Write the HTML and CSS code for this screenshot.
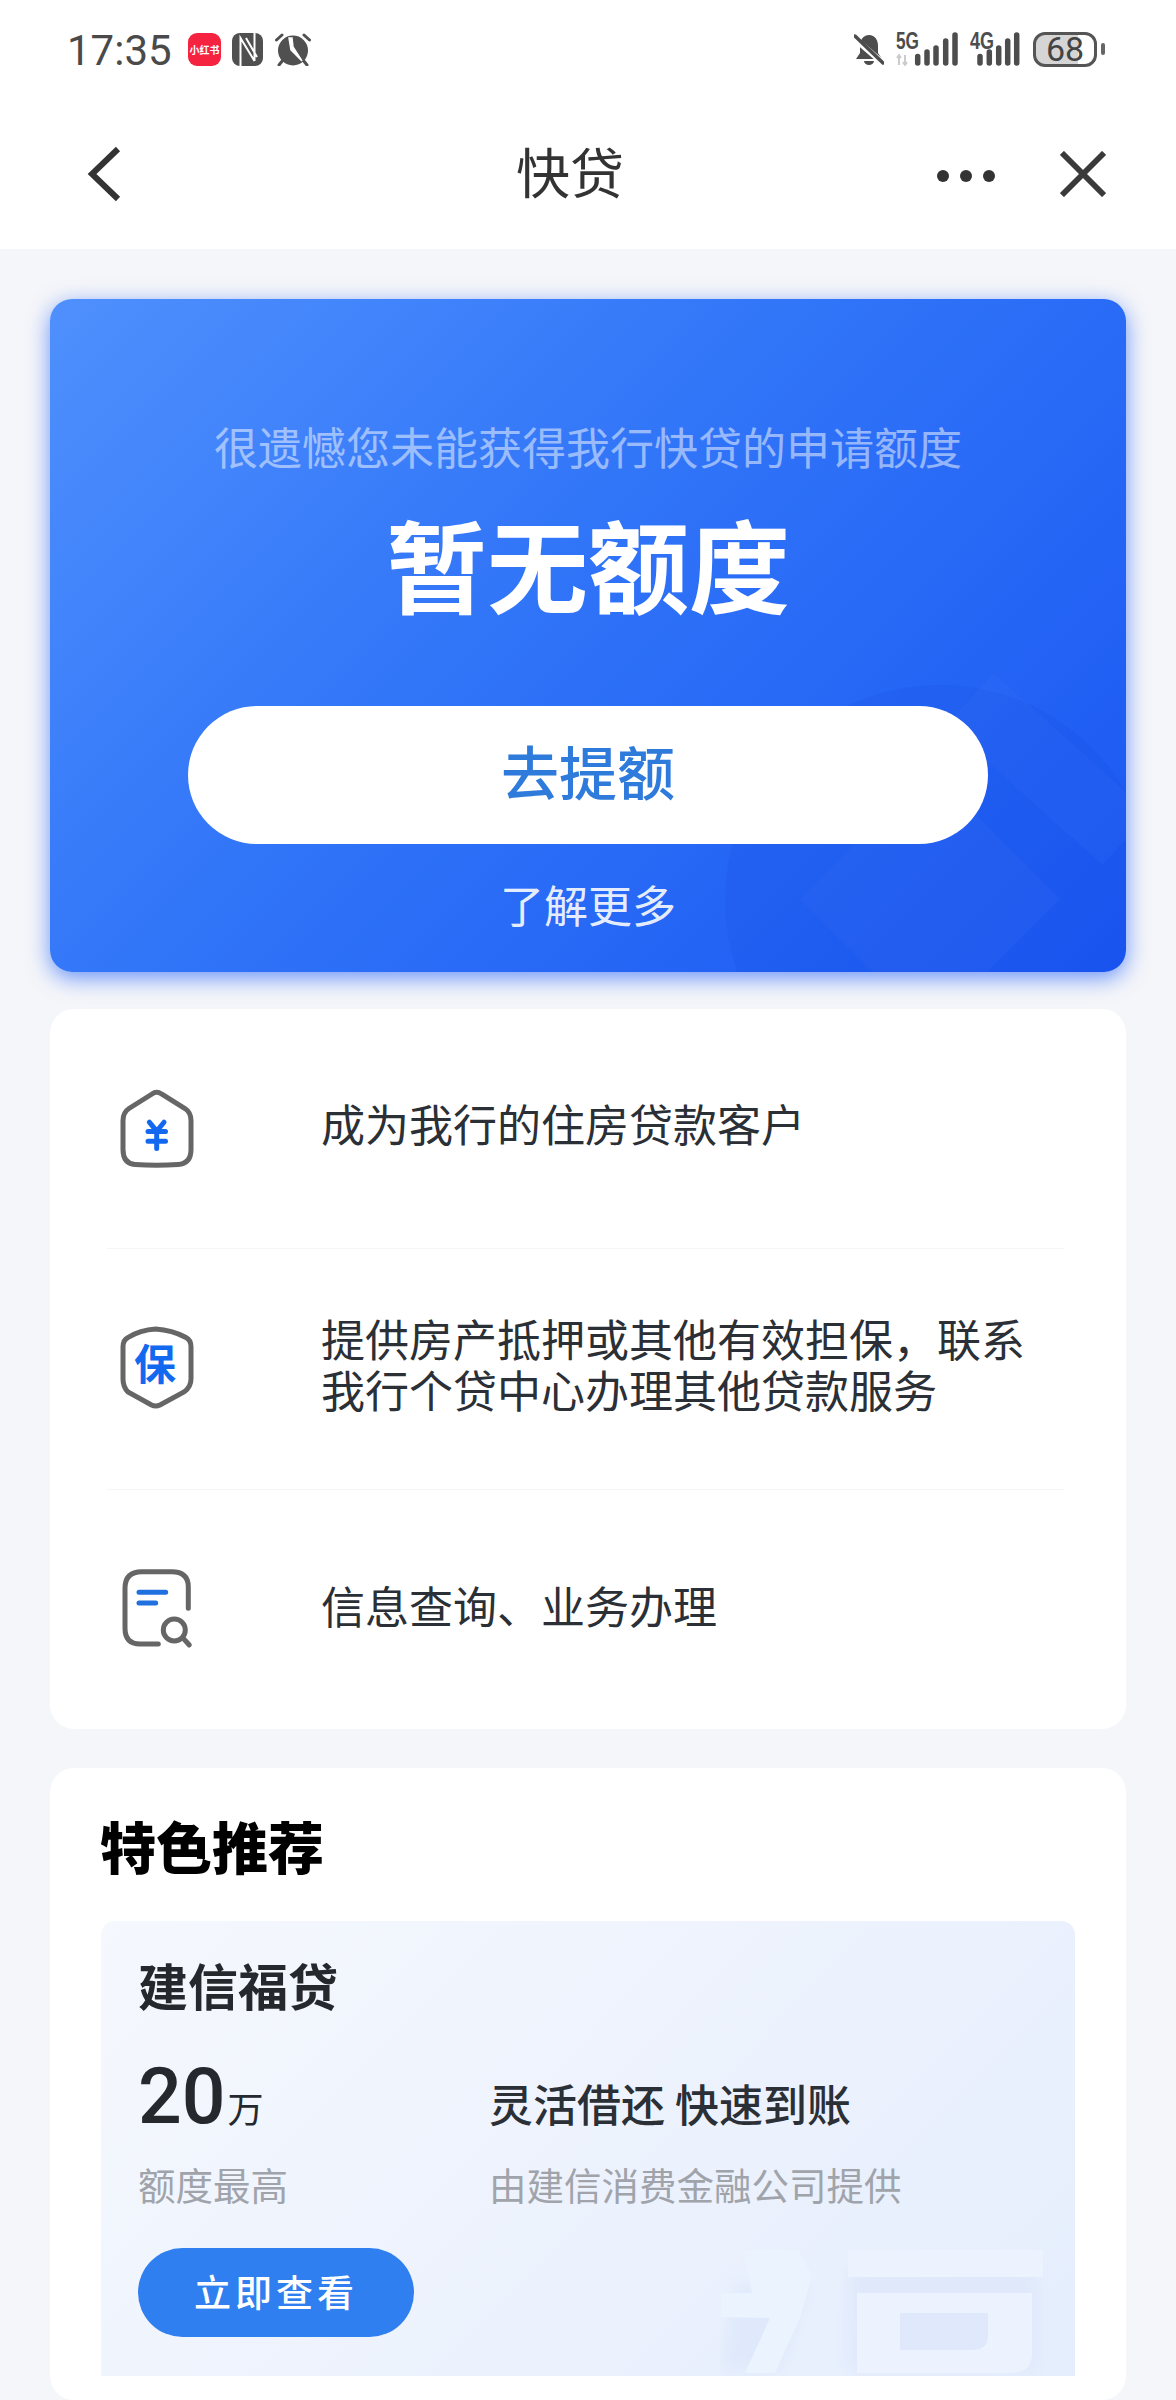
FILE: index.html
```html
<!DOCTYPE html>
<html lang="zh-CN">
<head>
<meta charset="utf-8">
<title>快贷</title>
<link rel="stylesheet" href="styles.css">
</head>
<body>
<div class="page">
  <header class="header">
    <div class="status">
      <span class="time">17:35</span>
      <span class="app-badge">小红书</span>
      <svg class="ic-nfc" viewBox="0 0 31 33"><rect width="31" height="33" rx="8" fill="#505050"/><path d="M8.500 33V5l14 23M22.500 0v28M14 5l11 19" fill="none" stroke="#fff" stroke-width="2"/></svg>
      <svg class="ic-alarm" viewBox="0 0 36 33"><circle cx="18" cy="17.500" r="15" fill="#505050"/><path d="M1.500 7 7 2M34.500 7 29 2M8 27l-4 5M28 27l4 5" stroke="#505050" stroke-width="3" stroke-linecap="round"/><path d="M14 5 16 17 27 28 18 14 17 5z" fill="#fff" stroke="#fff" stroke-width="1.500"/></svg>
      <div class="status-right">
        <svg class="ic-bell" viewBox="0 0 30 33"><path d="M15 2c6 0 9 5 9 11v7l4 6H2l4-6v-7C6 7 9 2 15 2z" fill="#4d4d4d"/><path d="M10 28h10a5 4 0 0 1-10 0z" fill="#4d4d4d"/><path d="M0 5 30 31" stroke="#fff" stroke-width="6"/><path d="M1 3 29 30" stroke="#4d4d4d" stroke-width="3.500" stroke-linecap="round"/></svg>
        <svg class="ic-sig ic-sig5" viewBox="0 -6 62 40"><text x="0" y="17" class="sig-text" textLength="23" lengthAdjust="spacingAndGlyphs">5G</text><path d="M3 33v-9M1 26l2-3 2 3M9 23v9M7 30l2 3 2-3" stroke="#ccc" stroke-width="2" fill="none"/><path d="M21.700 24.500V31M31 20v11M40 16v15M49.700 9v22M59 3v28" stroke="#4d4d4d" stroke-width="5.500" stroke-linecap="round"/></svg>
        <svg class="ic-sig ic-sig4" viewBox="0 -6 50 40"><text x="0" y="17" class="sig-text" textLength="24" lengthAdjust="spacingAndGlyphs">4G</text><path d="M10 24.500V31M19.300 20v11M28.700 16v15M37.700 9v22M46.700 3v28" stroke="#4d4d4d" stroke-width="5.500" stroke-linecap="round"/></svg>
        <div class="battery"><span class="battery-num">68</span></div>
        <span class="battery-tip"></span>
      </div>
    </div>
    <nav class="nav">
      <svg class="ic-back" viewBox="0 0 34 56"><path d="M31 3 5 28l26 25" fill="none" stroke="#333" stroke-width="6"/></svg>
      <div class="nav-title">快贷</div>
      <div class="nav-dots"><i></i><i></i><i></i></div>
      <svg class="ic-close" viewBox="0 0 48 48"><path d="M2 2l44 44M46 2 2 46" fill="none" stroke="#3a3a3a" stroke-width="6"/></svg>
    </nav>
  </header>

  <main class="main">
    <section class="hero">
      <svg class="hero-mark" viewBox="0 0 1076 673">
        <circle cx="890" cy="601" r="215" fill="#0f48dc" fill-opacity=".13"/>
        <path d="M880 470 1010 600 880 730 750 600z" fill="#fff" fill-opacity=".025"/>
        <path d="M920 400 1076 540" stroke="#5c8dff" stroke-opacity=".08" stroke-width="70"/>
      </svg>
      <p class="hero-sub">很遗憾您未能获得我行快贷的申请额度</p>
      <h1 class="hero-title">暂无额度</h1>
      <a class="hero-btn">去提额</a>
      <a class="hero-link">了解更多</a>
    </section>

    <section class="card list">
      <div class="row row-a">
        <svg class="row-ic" viewBox="0 0 76 82">
          <path d="M32 6.500Q36.700 3 41.500 6.500L65 21Q71 25 71 33V62Q71 76 58 77Q36.700 78.500 15 77Q3 76 3 62V33Q3 25 9 21Z" fill="none" stroke="#666" stroke-width="5"/>
          <path d="M29.300 34.700 36.700 43.700 44 34.700M28 44H45.500M28 53.700H45.500M36.700 44V61" fill="none" stroke="#1269f0" stroke-width="5" stroke-linecap="round" stroke-linejoin="round"/>
        </svg>
        <p class="row-text">成为我行的住房贷款客户</p>
      </div>
      <div class="row row-b">
        <svg class="row-ic row-ic-up" viewBox="0 0 76 85">
          <path d="M35.700 4Q52 5 66 12.500Q71 15 71 22V54Q71 62 64 67L40 80Q35.700 82 31.500 80L8 67Q3 62 3 54V22Q3 15 8 12.500Q20 5 35.700 4Z" fill="none" stroke="#666" stroke-width="5"/>
          <text x="35" y="55" class="bao">保</text>
        </svg>
        <p class="row-text">提供房产抵押或其他有效担保，联系<br>我行个贷中心办理其他贷款服务</p>
      </div>
      <div class="row">
        <svg class="row-ic row-ic-up" viewBox="0 0 76 85">
          <path d="M68.300 42.300V20.700Q68.300 5.700 51.700 5.700H21.700Q5 5.700 5 22.300V62.300Q5 78 20 78H38.300" fill="none" stroke="#666" stroke-width="5" stroke-linecap="round"/>
          <path d="M19 26.300H45.700M19 37H35.700" stroke="#2070e0" stroke-width="5" stroke-linecap="round"/>
          <circle cx="54.300" cy="64" r="11" fill="none" stroke="#666" stroke-width="5"/>
          <path d="M63.300 72.300 69.300 79" stroke="#666" stroke-width="5" stroke-linecap="round"/>
        </svg>
        <p class="row-text">信息查询、业务办理</p>
      </div>
    </section>

    <section class="card feature">
      <h2 class="feature-title">特色推荐</h2>
      <div class="promo">
        <svg class="promo-mark" viewBox="0 0 355 130">
          <defs><filter id="soft" x="-20%" y="-30%" width="140%" height="160%"><feGaussianBlur stdDeviation="8"/></filter></defs>
          <g filter="url(#soft)" fill="#dfe9fb">
            <rect x="128" y="20" width="190" height="105"/>
            <path d="M15 40 90 40 60 125 0 125z"/>
          </g>
          <path d="M24 4H78L92 30 80 72 55 127H25L50 72 1 71V47H32Z" fill="#eaf3fe"/>
          <path d="M128 4H323V31H128ZM137 47H312V108Q312 127 290 127H137ZM180 67V104H252Q268 104 268 90V67Z" fill="#ecf3fe" fill-rule="evenodd"/>
        </svg>
        <h3 class="promo-name">建信福贷</h3>
        <div class="promo-grid">
          <div class="amount"><b>20</b><span>万</span></div>
          <div class="promo-desc">灵活借还 快速到账</div>
          <div class="promo-note">额度最高</div>
          <div class="promo-note">由建信消费金融公司提供</div>
        </div>
        <a class="promo-btn">立即查看</a>
      </div>
    </section>
  </main>
</div>
</body>
</html>
```

FILE: styles.css
```css
* { box-sizing: border-box; }
html, body { margin: 0; padding: 0; }
body {
  background: #f5f6f9;
  font-family: "Noto Sans CJK SC", "Noto Sans", sans-serif;
  color: #2b2f36;
}
.page { width: 1176px; height: 2400px; overflow: hidden; }
p, h1, h2, h3 { margin: 0; }

.header { background: #fff; height: 249px; }
.status { height: 98px; display: flex; align-items: center; padding-left: 67px; }
.time { width: 121px; padding-top: 4px; font: 42px/1 Roboto, sans-serif; color: #4a4a4a; }
.app-badge {
  width: 33px; height: 33px; border-radius: 9px; background: #f5233f; color: #fff;
  font-size: 10px; font-weight: 700; line-height: 33px; text-align: center; white-space: nowrap;
}
.ic-nfc { width: 31px; height: 33px; margin-left: 11px; }
.ic-alarm { width: 36px; height: 33px; margin-left: 12px; }
.status-right { margin-left: auto; padding-right: 71px; display: flex; align-items: center; }
.ic-bell { width: 30px; height: 33px; }
.ic-sig { height: 40px; margin-top: -6px; margin-left: 12px; }
.ic-sig5 { width: 62px; }
.ic-sig4 { width: 50px; }
.sig-text { font: 700 24px "Liberation Sans", sans-serif; fill: #4d4d4d; }
.battery {
  width: 64px; height: 35px; margin-left: 13px; border: 3px solid #555; border-radius: 12px;
  background: linear-gradient(90deg, #d5d5d5 0 42px, #fff 42px);
  text-align: center;
}
.battery-num { display: block; font: 34px/29px Roboto, sans-serif; color: #444; }
.battery-tip { width: 4px; height: 12px; margin-left: 4px; border-radius: 2px; background: #666; }

.nav { height: 151px; display: flex; align-items: center; padding-left: 87px; }
.ic-back { width: 34px; height: 56px; }
.nav-title { width: 700px; margin-left: 99px; margin-top: -6px; text-align: center; font-size: 54px; line-height: 70px; color: #333; }
.nav-dots { display: flex; gap: 11px; width: 58px; margin-left: 17px; margin-top: 5px; }
.nav-dots i { width: 12px; height: 12px; border-radius: 50%; background: #333; }
.ic-close { width: 46px; height: 46px; margin-left: 65px; }

.main { padding: 50px 50px 0; }
.hero {
  position: relative; overflow: hidden; height: 673px; border-radius: 22px;
  background: linear-gradient(135deg, #4f90fd 0%, #3074f8 45%, #1a56f2 100%);
  box-shadow: 0 6px 22px rgba(45, 105, 250, .7);
  padding-top: 117px; display: flex; flex-direction: column; align-items: center;
}
.hero-mark { position: absolute; left: 0; top: 0; width: 1076px; height: 673px; }
.hero-sub, .hero-title, .hero-btn, .hero-link { position: relative; }
.hero-sub { font-size: 44px; line-height: 60px; color: rgba(255, 255, 255, .5); }
.hero-title { margin-top: 26px; font-size: 101px; line-height: 120px; font-weight: 700; color: #fff; }
.hero-btn {
  width: 800px; height: 138px; margin-top: 84px; border-radius: 69px; background: #fff;
  color: #2f7bdc; font-size: 58px; font-weight: 500; line-height: 128px; text-align: center;
}
.hero-link { margin-top: 30px; font-size: 44px; line-height: 60px; color: rgba(255, 255, 255, .9); }

.card { background: #fff; border-radius: 24px; }
.list { margin-top: 37px; height: 720px; padding: 0 62px 0 57px; }
.row { display: flex; align-items: center; height: 240px; padding-left: 13px; }
.row-a, .row-b { border-bottom: 1px solid #f6f6f6; }
.row-b { height: 241px; }
.row-ic { width: 76px; height: 85px; flex: none; }
.row-ic-up { margin-bottom: 4px; }
.row-text { margin-left: 125px; padding-bottom: 10px; font-size: 44px; line-height: 51px; color: #2b2f36; white-space: nowrap; }
.bao { font-size: 42px; font-weight: 700; fill: #1269f0; text-anchor: middle; }

.feature { margin-top: 39px; height: 632px; padding: 37px 51px 0; }
.feature-title { font-size: 56px; line-height: 80px; font-weight: 900; color: #000; margin-left: -1px; }
.promo {
  position: relative; overflow: hidden; margin-top: 36px; height: 455px; border-radius: 14px 14px 0 0;
  background: linear-gradient(135deg, #f5f8fd 0%, #eef3fd 45%, #e5eefd 100%);
  padding: 34px 37px 0;
}
.promo-mark { position: absolute; right: 0; bottom: 0; width: 355px; height: 130px; }
.promo-name, .promo-grid, .promo-btn { position: relative; }
.promo-name { font-size: 50px; line-height: 58px; font-weight: 700; color: #25282d; }
.promo-grid {
  display: grid; grid-template-columns: 351px auto; align-items: end; margin-top: 42px;
  grid-template-rows: 84px 60px; row-gap: 10px;
}
.amount { display: flex; align-items: baseline; color: #25282d; }
.amount b { font: 500 77px/84px Roboto, sans-serif; }
.amount span { font-size: 36px; margin-left: 2px; line-height: 40px; }
.promo-desc { font-size: 44px; font-weight: 500; line-height: 60px; padding-top: 12px; color: #2b2f36; align-self: center; }
.promo-note { font-size: 37.5px; line-height: 50px; color: #a0a4aa; }
.promo-btn {
  display: block; width: 276px; height: 89px; margin-top: 39px; border-radius: 45px; background: #2f7ff0;
  color: #fff; font-size: 37px; font-weight: 500; letter-spacing: 4px; line-height: 86px; text-align: center;
}
```
